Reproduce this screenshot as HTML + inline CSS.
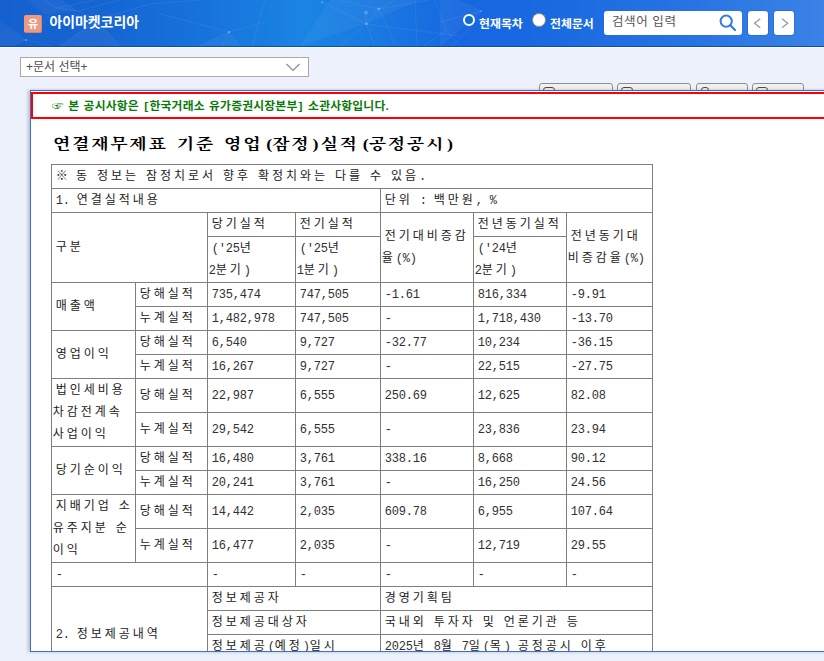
<!DOCTYPE html>
<html lang="ko">
<head>
<meta charset="utf-8">
<title>아이마켓코리아</title>
<style>
html,body{margin:0;padding:0;}
body{width:824px;height:661px;overflow:hidden;background:#ecf1fc;position:relative;
  font-family:"Liberation Sans","Noto Sans CJK KR","NanumGothic",sans-serif;}
#hdr{position:absolute;left:0;top:0;width:824px;height:46px;overflow:hidden;
  background:linear-gradient(90deg,#1560cf 0%,#1565d2 12%,#1773dc 25%,#1a84e3 37%,#1a78e1 46%,#1667e0 56%,#1969e1 66%,#2672e2 82%,#3a82e5 100%);border-bottom:1px solid #0e4fa9;box-shadow:0 1px 0 #fbfcff;}
#hdr svg.net{position:absolute;left:0;top:0;}
#ico{position:absolute;left:24px;top:15px;width:18px;height:17.5px;border-radius:2px;background:#ee9a82;
  color:#fff;font-size:11px;font-weight:bold;line-height:19.5px;text-align:center;box-shadow:-1px -1px 0 rgba(160,70,50,0.28) inset;}
#corp{position:absolute;left:49.5px;top:11.3px;color:#fff;font-weight:bold;font-size:13.9px;line-height:22px;white-space:nowrap;}
.rlbl{position:absolute;top:16.2px;color:#fff;font-weight:bold;font-size:11.9px;line-height:16px;white-space:nowrap;}
.radio{position:absolute;border-radius:50%;box-sizing:border-box;}
#r1{left:463px;top:14px;width:12px;height:12px;border:2px solid #fff;background:#0b6fd0;}
#r2{left:532px;top:13px;width:13.8px;height:13.8px;border:1px solid #8a8a8a;background:#fff;}
#srch{position:absolute;left:604px;top:11px;width:138px;height:24px;border-radius:3px;background:#fff;}
#srch span{position:absolute;left:8px;top:3px;font-size:12.5px;line-height:16px;color:#555;letter-spacing:0.6px;white-space:nowrap;}
.nav{position:absolute;top:11px;width:20px;height:24px;border-radius:3px;background:#fff;box-shadow:0 0 0 0.6px rgba(30,80,200,0.55);}
#sel{position:absolute;left:20px;top:57px;width:289px;height:20px;box-sizing:border-box;border:1px solid #a9a9a9;background:#fff;}
#sel span{position:absolute;left:5px;top:1px;font-size:12px;line-height:16px;color:#505050;white-space:nowrap;}
.btn{position:absolute;top:83px;height:12px;box-sizing:border-box;border:1px solid #8f8f8f;border-radius:3px;background:#f0f0f0;}
.btn i{position:absolute;top:3px;height:8px;box-sizing:border-box;border:1.5px solid #4a4a4a;border-radius:3px;}
#frame{position:absolute;left:30px;top:90px;width:900px;height:562px;box-sizing:border-box;border:1px solid #3a6fd0;background:#fff;
  box-shadow:-2px 0 3px rgba(50,60,80,0.28);overflow:hidden;}
#notice{position:absolute;left:0;top:1px;width:900px;height:27px;box-sizing:border-box;border:2px solid #ff0000;}
#notice span{position:absolute;left:19px;top:3.5px;font-size:11.8px;font-weight:bold;color:#0a7a0a;line-height:17px;white-space:nowrap;letter-spacing:0.2px;word-spacing:0.8px;}
#notice b{padding:0 1.1px;}
#title{position:absolute;left:22px;top:41.3px;transform:scaleY(0.8);transform-origin:0 50%;height:24px;line-height:24px;white-space:nowrap;color:#000;
  font-family:"Liberation Serif","Noto Serif CJK KR","Noto Serif CJK SC",serif;font-weight:bold;font-size:18px;letter-spacing:1.7px;word-spacing:3px;}
#title i{font-style:normal;display:inline-block;width:10px;text-align:left;letter-spacing:0;text-indent:2px;}
#title i.o{text-align:right;text-indent:0;}
#t{position:absolute;left:20px;top:73px;border-collapse:collapse;table-layout:fixed;width:601px;
  font-family:"Liberation Mono","Noto Sans CJK KR","NanumGothic",monospace;font-size:12px;line-height:22px;color:#222;}
#t td{border:1px solid #7f7f7f;padding:1px 0 0 0.7px;text-indent:3px;letter-spacing:2.96px;word-spacing:-3.16px;vertical-align:middle;white-space:nowrap;overflow:hidden;}
#t .n{letter-spacing:-0.2px;font-size:12px;color:#303030;}
</style>
</head>
<body>
<div id="hdr">
  <svg class="net" width="824" height="46" viewBox="0 0 824 46">
    <g fill="#ffffff" fill-opacity="0.045" stroke="none">
      <path d="M27 0 L62 0 L78 11 L44 14 Z"/><path d="M0 22 L26 40 L10 46 L0 46 Z"/><path d="M60 46 L96 20 L120 46 Z"/>
      <path d="M300 46 L330 0 L420 0 L366 24 Z"/><path d="M440 46 L440 0 L456 0 L481 11 Z"/><path d="M229 32 L200 46 L240 46 Z"/>
    </g>
    <g stroke="#ffffff" stroke-opacity="0.085" stroke-width="0.8" fill="none">
      <path d="M0 20 L26 40 L57 8 L95 0 M26 40 L10 46 M26 40 L52 46 M57 8 L44 0 M57 8 L78 11 L120 0 M78 11 L96 20 L60 46 M96 20 L120 46 M96 20 L150 4 L200 0"/>
      <path d="M229 32 L200 46 M229 32 L222 46 M229 32 L240 46 M229 32 L160 14 M265 0 L252 46 M229 32 L265 22"/>
      <path d="M322 2 L366 24 L340 46 M366 24 L379 9 L395 0 M366 24 L375 46 M366 24 L386 46 M379 9 L396 46 M366 13 L366 24 M366 24 L460 36 M415 0 L417 46 M435 0 L446 30 L460 46 M446 30 L424 46 M340 0 L379 9 L430 0"/>
      <path d="M481 11 L440 46 M481 11 L456 0 M481 11 L440 22 M481 11 L468 30 L452 46"/>
    </g>
    <g fill="#ffffff" fill-opacity="0.35"><circle cx="229" cy="32" r="1.1"/><circle cx="378.6" cy="8.7" r="1.2"/><circle cx="366.4" cy="23.7" r="1.2"/><circle cx="322" cy="2.3" r="0.9"/><circle cx="26" cy="40" r="0.9"/><circle cx="96" cy="20" r="0.9"/><circle cx="481" cy="11" r="0.8"/></g>
    <circle cx="366" cy="12.6" r="2.2" fill="#ffffff" fill-opacity="0.18"/>
  </svg>
  <div id="ico">유</div>
  <div id="corp">아이마켓코리아</div>
  <div class="radio" id="r1"></div><div class="rlbl" style="left:479px">현재목차</div>
  <div class="radio" id="r2"></div><div class="rlbl" style="left:550px">전체문서</div>
  <div id="srch"><span>검색어 입력</span>
    <svg width="20" height="20" viewBox="0 0 20 20" style="position:absolute;left:114px;top:2px"><circle cx="8.2" cy="8.2" r="5.6" fill="none" stroke="#2f7de0" stroke-width="2"/><path d="M12.3 12.3 L17 17" stroke="#2f7de0" stroke-width="2.2" stroke-linecap="round"/></svg>
  </div>
  <div class="nav" style="left:748px"><svg width="20" height="24" viewBox="0 0 20 24"><path d="M12.2 7.8 L6.6 12.3 L12.2 16.8" fill="none" stroke="#999999" stroke-width="1.3"/></svg></div>
  <div class="nav" style="left:774px"><svg width="20" height="24" viewBox="0 0 20 24"><path d="M8 7.8 L13.6 12.3 L8 16.8" fill="none" stroke="#999999" stroke-width="1.3"/></svg></div>
</div>
<div id="sel"><span>+문서 선택+</span>
  <svg width="16" height="10" viewBox="0 0 16 10" style="position:absolute;left:264px;top:5px"><path d="M1.5 1 L8 7.5 L14.5 1" fill="none" stroke="#8c8c8c" stroke-width="1.2"/></svg>
</div>
<div class="btn" style="left:539px;width:74px"><i style="left:3px;width:12px"></i></div>
<div class="btn" style="left:617px;width:74px"><i style="left:3px;width:12px"></i></div>
<div class="btn" style="left:696px;width:52px"><i style="left:4px;width:8px"></i></div>
<div class="btn" style="left:752px;width:52px"><i style="left:3px;width:12px"></i></div>
<div id="frame">
  <div id="notice"><span>☞ 본 공시사항은 <b>[</b>한국거래소 유가증권시장본부<b>]</b> 소관사항입니다.</span></div>
  <div id="title">연결재무제표 기준 영업<i class="o">(</i>잠정<i>)</i>실적<i class="o">(</i>공정공시<i>)</i></div>
  <table id="t"><colgroup><col style="width:84px"><col style="width:72px"><col style="width:88px"><col style="width:85px"><col style="width:93px"><col style="width:93px"><col style="width:86px"></colgroup>
<tr style="height:24px"><td colspan="7"><span style="letter-spacing:1.2px">※</span> 동 정보는 잠정치로서 향후 확정치와는 다를 수 있음<span class="n">.</span></td></tr>
<tr style="height:24px"><td colspan="4"><span class="n">1.</span> 연결실적내용</td><td colspan="3">단위 <span class="n">:</span> 백만원<span class="n">,</span> <span class="n">%</span></td></tr>
<tr style="height:24px"><td colspan="2" rowspan="2">구분</td><td>당기실적</td><td>전기실적</td><td rowspan="2">전기대비증감<br>율<span class="n">(%)</span></td><td>전년동기실적</td><td rowspan="2">전년동기대<br>비증감율<span class="n">(%)</span></td></tr>
<tr style="height:46px"><td><span class="n">('25</span>년<br><span class="n">2</span>분기<span class="n">)</span></td><td><span class="n">('25</span>년<br><span class="n">1</span>분기<span class="n">)</span></td><td><span class="n">('24</span>년<br><span class="n">2</span>분기<span class="n">)</span></td></tr>
<tr style="height:24px"><td rowspan="2">매출액</td><td>당해실적</td><td><span class="n">735,474</span></td><td><span class="n">747,505</span></td><td><span class="n">-1.61</span></td><td><span class="n">816,334</span></td><td><span class="n">-9.91</span></td></tr>
<tr style="height:24px"><td>누계실적</td><td><span class="n">1,482,978</span></td><td><span class="n">747,505</span></td><td><span class="n">-</span></td><td><span class="n">1,718,430</span></td><td><span class="n">-13.70</span></td></tr>
<tr style="height:24px"><td rowspan="2">영업이익</td><td>당해실적</td><td><span class="n">6,540</span></td><td><span class="n">9,727</span></td><td><span class="n">-32.77</span></td><td><span class="n">10,234</span></td><td><span class="n">-36.15</span></td></tr>
<tr style="height:24px"><td>누계실적</td><td><span class="n">16,267</span></td><td><span class="n">9,727</span></td><td><span class="n">-</span></td><td><span class="n">22,515</span></td><td><span class="n">-27.75</span></td></tr>
<tr style="height:34px"><td rowspan="2">법인세비용<br>차감전계속<br>사업이익</td><td>당해실적</td><td><span class="n">22,987</span></td><td><span class="n">6,555</span></td><td><span class="n">250.69</span></td><td><span class="n">12,625</span></td><td><span class="n">82.08</span></td></tr>
<tr style="height:34px"><td>누계실적</td><td><span class="n">29,542</span></td><td><span class="n">6,555</span></td><td><span class="n">-</span></td><td><span class="n">23,836</span></td><td><span class="n">23.94</span></td></tr>
<tr style="height:24px"><td rowspan="2">당기순이익</td><td>당해실적</td><td><span class="n">16,480</span></td><td><span class="n">3,761</span></td><td><span class="n">338.16</span></td><td><span class="n">8,668</span></td><td><span class="n">90.12</span></td></tr>
<tr style="height:24px"><td>누계실적</td><td><span class="n">20,241</span></td><td><span class="n">3,761</span></td><td><span class="n">-</span></td><td><span class="n">16,250</span></td><td><span class="n">24.56</span></td></tr>
<tr style="height:34px"><td rowspan="2">지배기업 소<br>유주지분 순<br>이익</td><td>당해실적</td><td><span class="n">14,442</span></td><td><span class="n">2,035</span></td><td><span class="n">609.78</span></td><td><span class="n">6,955</span></td><td><span class="n">107.64</span></td></tr>
<tr style="height:34px"><td>누계실적</td><td><span class="n">16,477</span></td><td><span class="n">2,035</span></td><td><span class="n">-</span></td><td><span class="n">12,719</span></td><td><span class="n">29.55</span></td></tr>
<tr style="height:24px"><td colspan="2"><span class="n">-</span></td><td><span class="n">-</span></td><td><span class="n">-</span></td><td><span class="n">-</span></td><td><span class="n">-</span></td><td><span class="n">-</span></td></tr>
<tr style="height:24px"><td colspan="2" rowspan="4"><span class="n">2.</span> 정보제공내역</td><td colspan="2">정보제공자</td><td colspan="3">경영기획팀</td></tr>
<tr style="height:24px"><td colspan="2">정보제공대상자</td><td colspan="3">국내외 투자자 및 언론기관 등</td></tr>
<tr style="height:24px"><td colspan="2">정보제공<span class="n">(</span>예정<span class="n">)</span>일시</td><td colspan="3"><span class="n">2025</span>년 <span class="n">8</span>월 <span class="n">7</span>일<span class="n">(</span>목<span class="n">)</span> 공정공시 이후</td></tr>
<tr style="height:24px"><td colspan="2">행사명<span class="n">(</span>장소<span class="n">)</span></td><td colspan="3"><span class="n">-</span></td></tr>
</table>
</div>
</body>
</html>
